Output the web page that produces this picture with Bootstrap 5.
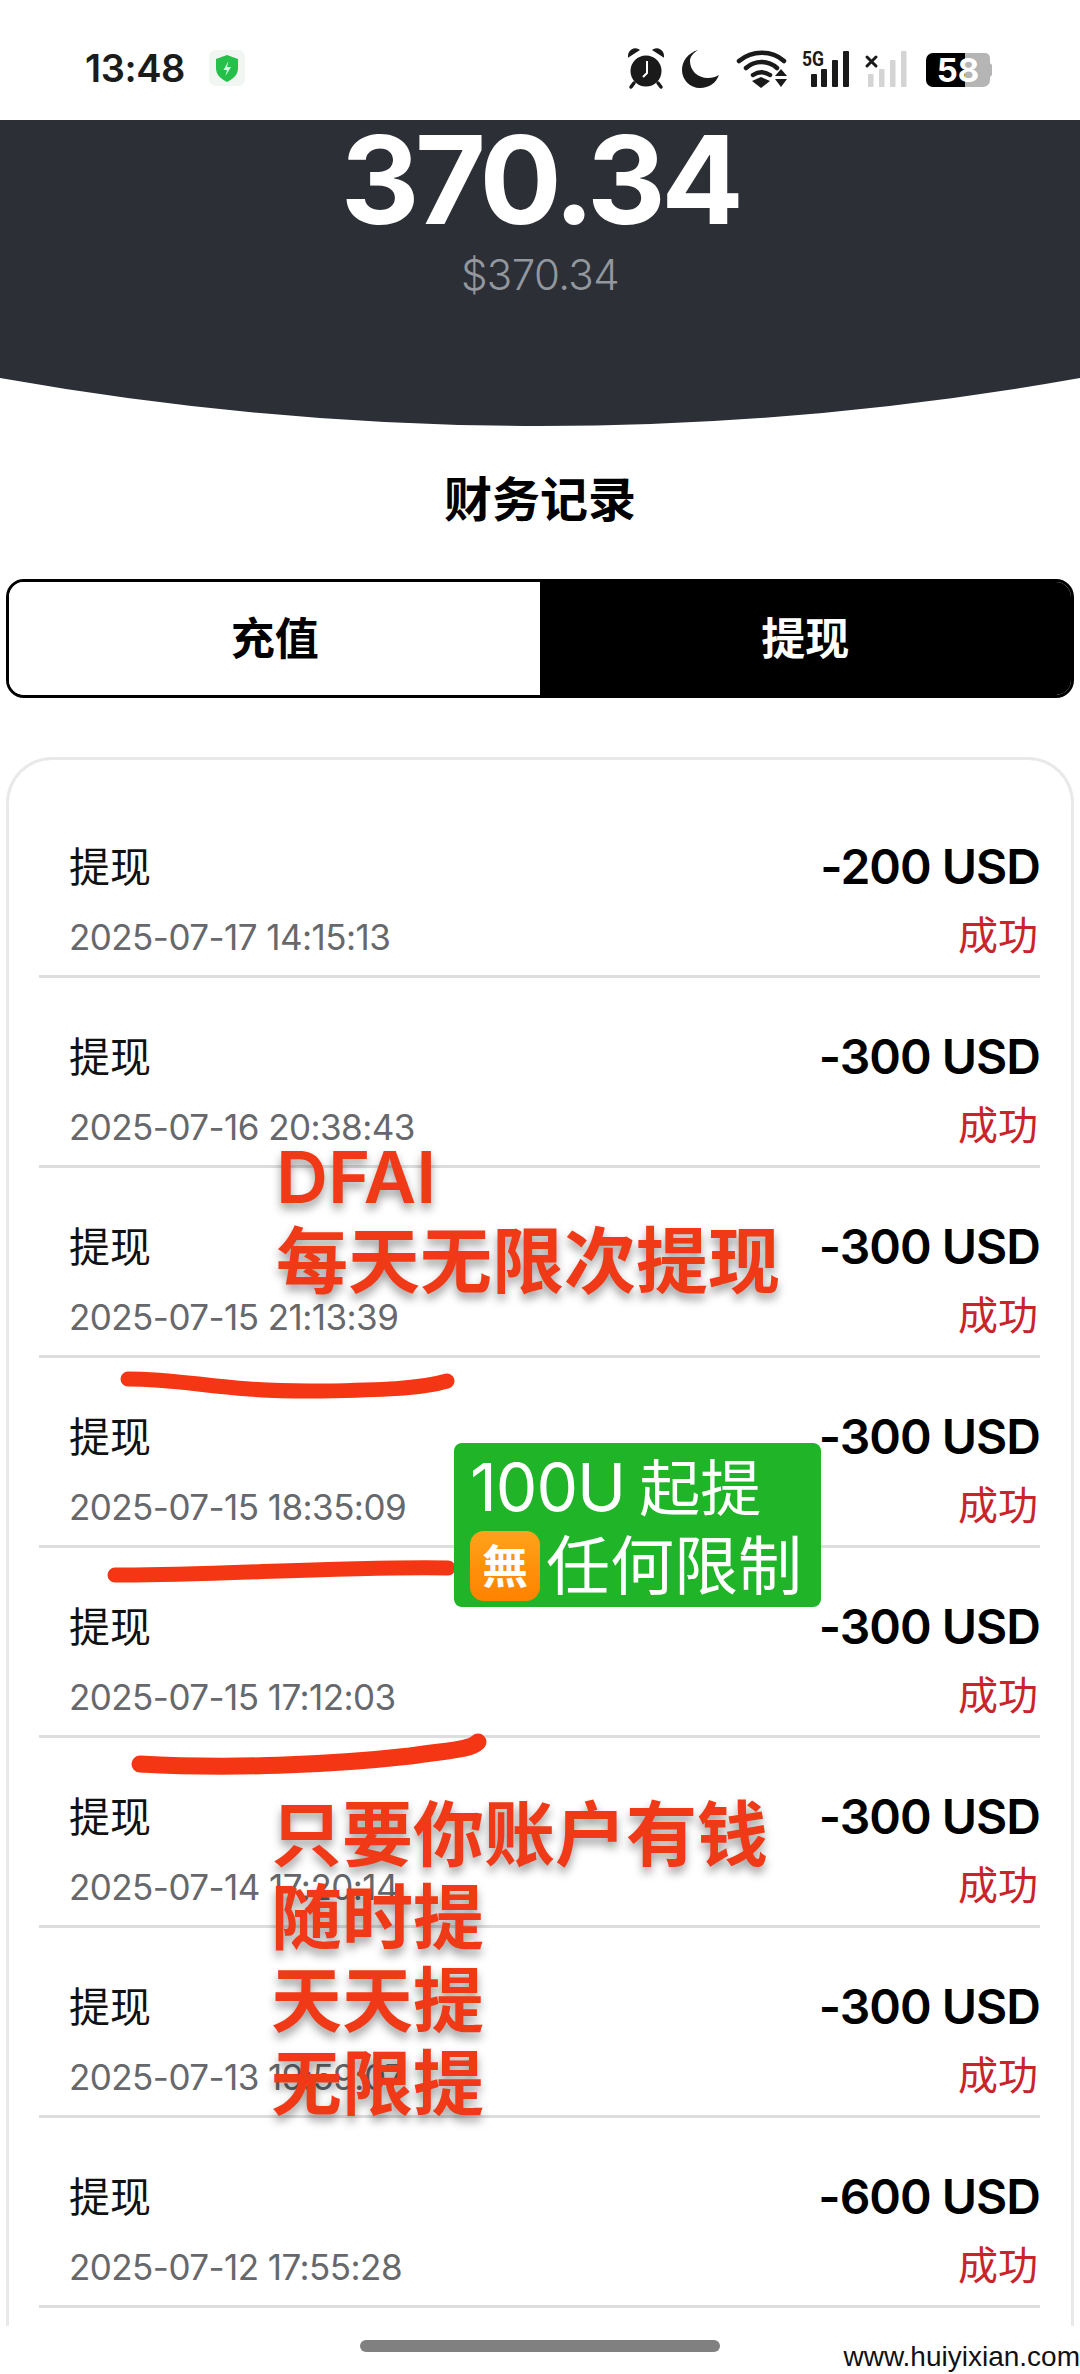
<!DOCTYPE html>
<html lang="zh-CN">
<head>
<meta charset="utf-8">
<title>财务记录</title>
<link href="https://cdn.jsdelivr.net/npm/bootstrap@5.3.0/dist/css/bootstrap.min.css" rel="stylesheet">
<style>
html,body{margin:0;padding:0;background:#fff}
body{width:1080px;height:2374px;overflow:hidden;position:relative;font-family:Inter,"Noto Sans CJK SC",sans-serif;color:#000}
.sbar{height:120px;padding:0 88px 0 85px}
.sbar-time{font-size:38px;font-weight:600;color:#1b1b1b;line-height:1;letter-spacing:-.4px;margin-top:16px}
.sbar-left{gap:24px}
.sbar-ic{position:absolute;top:0;left:0}
.hero{background:#2c3036;height:258px;color:#fff;text-align:center}
.hero-num{font-size:122px;font-weight:700;line-height:120px;letter-spacing:-4.5px}
.hero-sub{font-size:42px;line-height:60px;margin-top:5px;color:#93979e;font-weight:300;letter-spacing:-.6px}
.curve{display:block;width:1080px;height:48px}
.ttl{height:153px;padding-bottom:6px;font-size:48px;font-weight:700;margin:0}
.tabs{margin:0 6px;width:1068px;height:119px;border-radius:18px;overflow:hidden;border:3px solid #000}
.tabs .btn{flex:1 1 50%;border:0;border-radius:0;font-size:44px;font-weight:700;padding:0;line-height:1;color:#000}
.tabs .btn.is-on{background:#000;color:#fff}
.tabs .btn.is-off{background:#fff;color:#000}
.rec{margin:59px 6px 0;width:1068px;height:1569px;border:3px solid #e9e9e9;border-bottom:0;border-radius:46px 46px 0 0;padding:28px 31px 0 30px;overflow:hidden;background:#fff}
.rec-row{height:190px;padding:44px 0 3px 30px;border-bottom:3px solid #dddddd}
.rec-t{font-size:41px;line-height:70px;color:#111}
.rec-d{font-size:35px;line-height:70px;color:#66686c;letter-spacing:-.55px}
.rec-a{font-size:48px;line-height:70px;font-weight:600;letter-spacing:-1px;text-align:right}
.rec-s{font-size:40px;line-height:68px;color:#c8242c;text-align:right;padding-right:2px}
.homebar{height:48px;padding-top:14px}
.homebar i{display:block;width:360px;height:12px;border-radius:6px;background:#808080}
.wm{position:absolute;right:0;bottom:2px;font-family:"Liberation Sans",sans-serif;font-size:28px;line-height:30px;color:#111}
.strokes{position:absolute;top:0;left:0;pointer-events:none}
.note{position:absolute;color:#f03a17;font-weight:600;text-shadow:0 6px 10px rgba(0,0,0,.38);white-space:nowrap}
.n1{left:276px;top:1135px;font-size:72px;line-height:84px}
.n2{left:271px;top:1793px;font-size:71px;line-height:83px}
.gbox{position:absolute;left:454px;top:1443px;width:367px;height:164px;background:#20b528;border-radius:8px;color:#fff;padding:8px 0 0 16px;white-space:nowrap}
.gl1{line-height:72px;display:flex;gap:14px;align-items:baseline}
.gl1-u{font-size:66px;letter-spacing:-1px}
.gl1-c{font-size:61px}
.gl2{font-size:64px;line-height:74px;gap:6px;margin-top:4px}
.emo{width:70px;height:70px;border-radius:14px;background:linear-gradient(#ffa21a,#ff8200);font-size:46px;line-height:1;font-weight:700;flex:none}
</style>
</head>
<body>
<div class="sbar d-flex align-items-center justify-content-between">
  <div class="sbar-left d-flex align-items-center">
    <span class="sbar-time">13:48</span>
    <svg width="36" height="36" viewBox="0 0 36 36" class="mt-3"><rect width="36" height="36" rx="7" fill="#f2f6f2"/><path d="M18 5l11 4v9c0 7-5 11-11 14C12 29 7 25 7 18V9z" fill="#25c04a"/><path d="M19.500 11l-5 9h3.500l-1.500 6 5.500-9H18z" fill="#d8f7de"/></svg>
  </div>
</div>
<svg class="sbar-ic" width="1080" height="120" viewBox="0 0 1080 120">
  <circle cx="646" cy="71" r="15.500" fill="#1a1a1a"/>
  <path d="M629 56c0-5 5-8 9-6zM663 56c0-5-5-8-9-6z" fill="#1a1a1a" stroke="#1a1a1a" stroke-width="2"/>
  <path d="M634 83l-3 4M658 83l3 4" stroke="#1a1a1a" stroke-width="3.500" stroke-linecap="round"/>
  <path d="M647 61v12l-4 4" stroke="#fff" stroke-width="2" fill="none"/>
  <path d="M698 50c-10 3-16 11-16 20 0 10 8 18 18 18 9 0 16-5 19-13-3 2-7 3-11 3-11 0-18-8-18-17 0-4 3-8 8-11z" fill="#1a1a1a"/>
  <path d="M739 61c13-11 33-11 45 0" fill="none" stroke="#1a1a1a" stroke-width="4.500" stroke-linecap="round"/>
  <path d="M746 68c9-8 22-8 31 0" fill="none" stroke="#1a1a1a" stroke-width="4.500" stroke-linecap="round"/>
  <path d="M753 75c6-4 11-4 17 0" fill="none" stroke="#1a1a1a" stroke-width="4.500" stroke-linecap="round"/>
  <path d="M752 81l9-4 9 4-9 7z" fill="#1a1a1a"/>
  <path d="M775 76h12l-6-7zM775 79h12l-6 8z" fill="#1a1a1a"/>
  <text x="802" y="66" font-family="Roboto,sans-serif" font-size="21" font-weight="700" fill="#1a1a1a" textLength="22" lengthAdjust="spacingAndGlyphs">5G</text>
  <g fill="#1a1a1a"><rect x="811" y="74" width="6" height="13" rx="1"/><rect x="821" y="69" width="6" height="18" rx="1"/><rect x="832" y="60" width="6" height="27" rx="1"/><rect x="843" y="51" width="6" height="36" rx="1"/></g>
  <path d="M867 57l9 9M876 57l-9 9" stroke="#1a1a1a" stroke-width="3" stroke-linecap="round"/>
  <g fill="#d4d4d4"><rect x="868" y="74" width="5.500" height="13" rx="1"/><rect x="879" y="69" width="5.500" height="18" rx="1"/><rect x="890" y="60" width="5.500" height="27" rx="1"/><rect x="901" y="51" width="5.500" height="36" rx="1"/></g>
  <path d="M965 53h-32a7 7 0 0 0-7 7v20a7 7 0 0 0 7 7h32z" fill="#000"/>
  <path d="M965 53h20a5 5 0 0 1 5 5v5l2 2v10l-2 2v3a7 7 0 0 1-7 7h-18z" fill="#b5b5b5"/>
  <text x="958" y="82" text-anchor="middle" font-family="Inter,sans-serif" font-size="33" font-weight="700" fill="#fff">58</text>
</svg>

<div class="hero">
  <div class="hero-num">370.34</div>
  <div class="hero-sub">$370.34</div>
</div>
<svg class="curve" viewBox="0 0 1080 48"><path d="M0 0H1080Q540 96 0 0z" fill="#2c3036"/></svg>

<h1 class="ttl d-flex align-items-center justify-content-center">财务记录</h1>

<div class="btn-group tabs d-flex" role="group">
  <button type="button" class="btn is-off">充值</button>
  <button type="button" class="btn is-on">提现</button>
</div>

<div class="rec" id="rec">
  <div class="rec-row d-flex justify-content-between"><div><div class="rec-t">提现</div><div class="rec-d">2025-07-17 14:15:13</div></div><div><div class="rec-a">-200 USD</div><div class="rec-s">成功</div></div></div>
  <div class="rec-row d-flex justify-content-between"><div><div class="rec-t">提现</div><div class="rec-d">2025-07-16 20:38:43</div></div><div><div class="rec-a">-300 USD</div><div class="rec-s">成功</div></div></div>
  <div class="rec-row d-flex justify-content-between"><div><div class="rec-t">提现</div><div class="rec-d">2025-07-15 21:13:39</div></div><div><div class="rec-a">-300 USD</div><div class="rec-s">成功</div></div></div>
  <div class="rec-row d-flex justify-content-between"><div><div class="rec-t">提现</div><div class="rec-d">2025-07-15 18:35:09</div></div><div><div class="rec-a">-300 USD</div><div class="rec-s">成功</div></div></div>
  <div class="rec-row d-flex justify-content-between"><div><div class="rec-t">提现</div><div class="rec-d">2025-07-15 17:12:03</div></div><div><div class="rec-a">-300 USD</div><div class="rec-s">成功</div></div></div>
  <div class="rec-row d-flex justify-content-between"><div><div class="rec-t">提现</div><div class="rec-d">2025-07-14 17:20:14</div></div><div><div class="rec-a">-300 USD</div><div class="rec-s">成功</div></div></div>
  <div class="rec-row d-flex justify-content-between"><div><div class="rec-t">提现</div><div class="rec-d">2025-07-13 19:59:07</div></div><div><div class="rec-a">-300 USD</div><div class="rec-s">成功</div></div></div>
  <div class="rec-row d-flex justify-content-between"><div><div class="rec-t">提现</div><div class="rec-d">2025-07-12 17:55:28</div></div><div><div class="rec-a">-600 USD</div><div class="rec-s">成功</div></div></div>
</div>

<div class="homebar d-flex justify-content-center"><i></i></div>
<div class="wm">www.huiyixian.com</div>

<svg class="strokes" width="1080" height="2374" viewBox="0 0 1080 2374" fill="none" stroke="#f43614" stroke-linecap="round">
  <path d="M128 1379C190 1379 220 1392 320 1391C380 1390 420 1389 447 1381" stroke-width="15"/>
  <path d="M115 1575C200 1576 350 1566 448 1568" stroke-width="15"/>
  <path d="M140 1764C230 1769 330 1765 410 1756C450 1750 470 1750 478 1742" stroke-width="17"/>
</svg>
<div class="note n1">DFAI<br>每天无限次提现</div>
<div class="note n2">只要你账户有钱<br>随时提<br>天天提<br>无限提</div>
<div class="gbox">
  <div class="gl1"><span class="gl1-u">100U</span><span class="gl1-c">起提</span></div>
  <div class="gl2 d-flex align-items-center"><span class="emo d-flex align-items-center justify-content-center">無</span><span>任何限制</span></div>
</div>
<script src="https://cdn.jsdelivr.net/npm/bootstrap@5.3.0/dist/js/bootstrap.bundle.min.js"></script>
</body>
</html>
